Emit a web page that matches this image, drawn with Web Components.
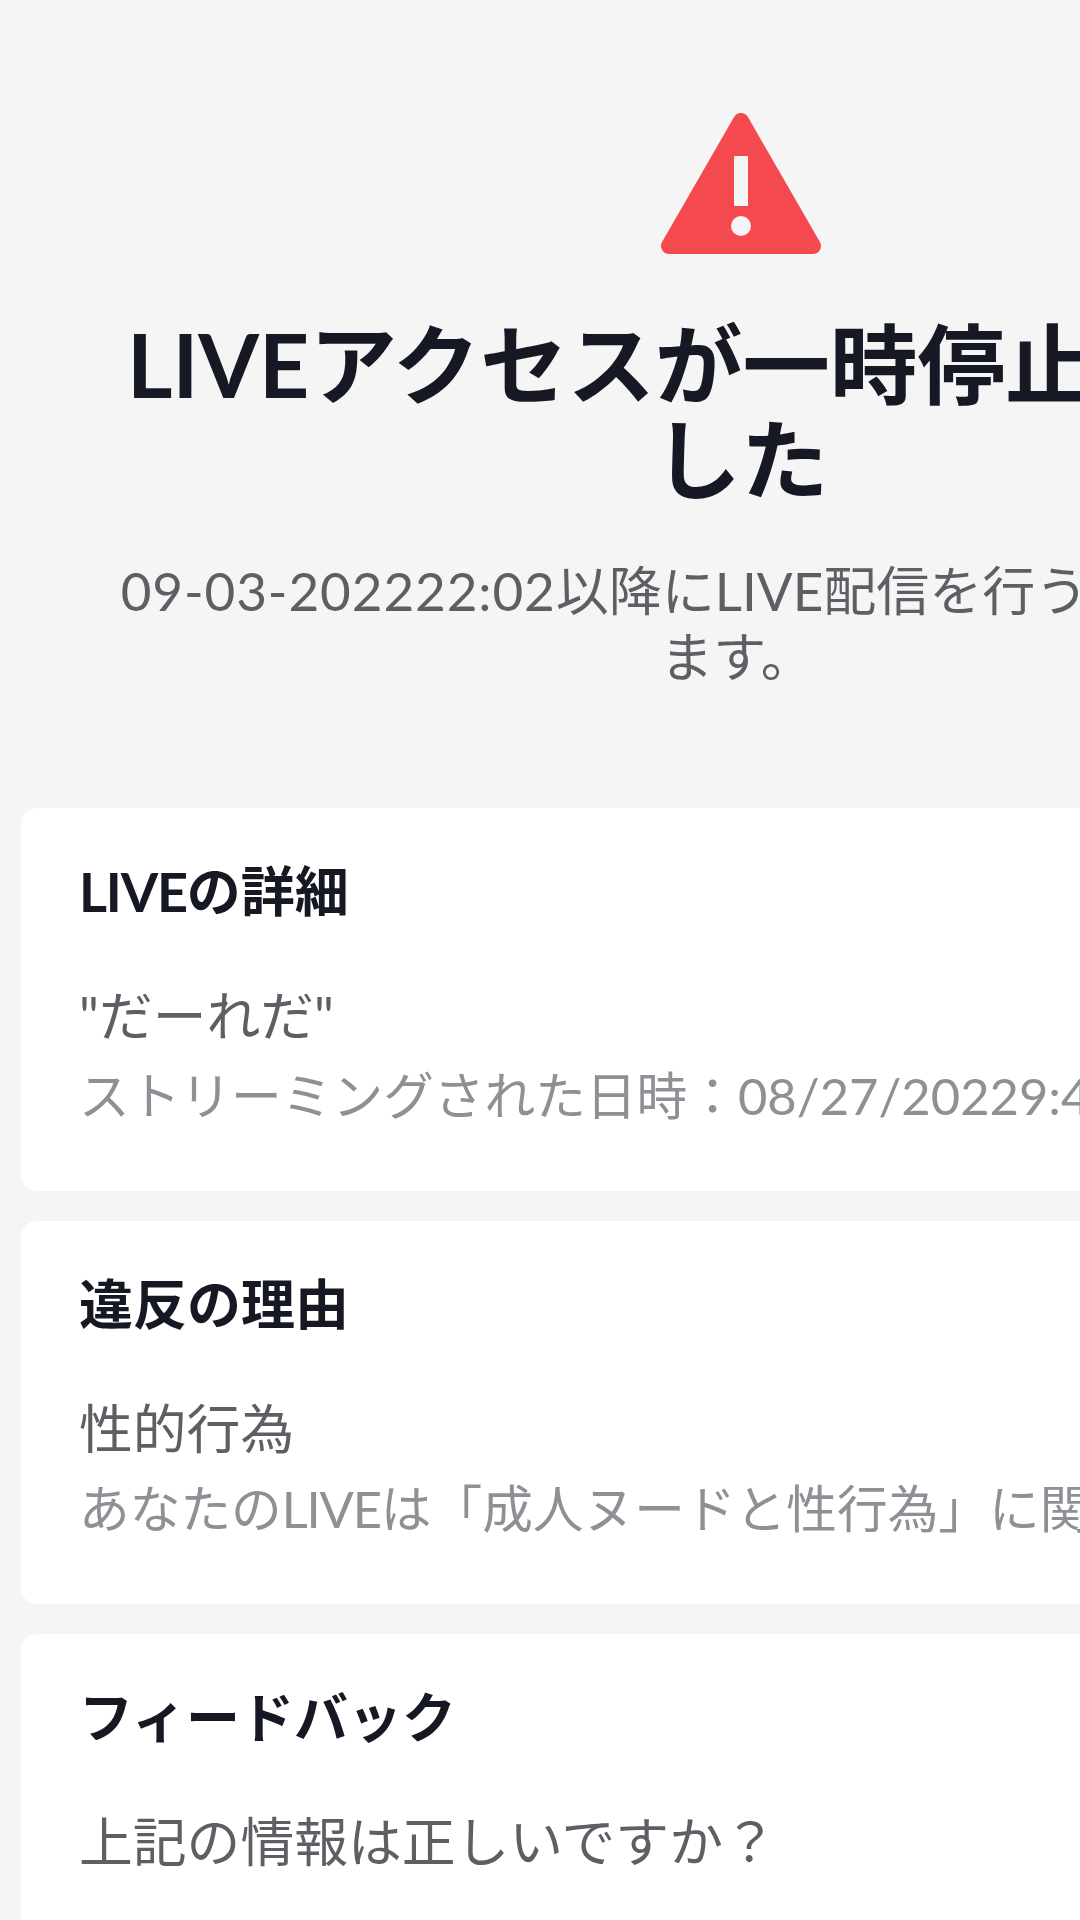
<!DOCTYPE html>
<html lang="ja">
<head>
<meta charset="utf-8">
<title>LIVE</title>
<style>
	html, body { margin: 0; background: #f5f5f6; overflow: hidden; height: 1920px; }
	body { font-family: Lato, "Noto Sans CJK JP", sans-serif; }
	live-page { width: 1482px; height: 1920px; overflow: hidden; }
	.digits { letter-spacing: .9px; }
	.latin { letter-spacing: -1.2px; }
</style>
</head>
<body>
<live-page>
	<suspend-notice>
		<span slot="title">LIVEアクセスが一時停止されました</span>
		<span slot="desc"><span class="digits">09-03-202222:02</span>以降にLIVE配信を行うことができます。</span>
	</suspend-notice>
	<info-card>
		<span slot="heading"><span class="latin">LIVE</span>の詳細</span>
		<span slot="main">"だーれだ"</span>
		<span slot="sub">ストリーミングされた日時：08/27/20229:42</span>
	</info-card>
	<info-card>
		<span slot="heading">違反の理由</span>
		<span slot="main">性的行為</span>
		<span slot="sub">あなたの<span class="latin">LIVE</span>は「成人ヌードと性行為」に関する</span>
	</info-card>
	<info-card>
		<span slot="heading">フィードバック</span>
		<span slot="main">上記の情報は正しいですか？</span>
	</info-card>
</live-page>

<script>
(function(){

	const pageTmpl = document.createElement("template");
	pageTmpl.innerHTML = `
		<style>
			:host {
				display: flex;
				flex-direction: column;
				gap: 30px;
				padding: 113px 21px 0;
				box-sizing: border-box;
			}
		</style>
		<slot></slot>
	`;

	class LivePage extends HTMLElement {
		constructor() {
			super();
			this.attachShadow({mode: "open"}).appendChild(pageTmpl.content.cloneNode(true));
		}
	}
	customElements.define("live-page", LivePage);


	const noticeTmpl = document.createElement("template");
	noticeTmpl.innerHTML = `
		<style>
			:host {
				display: flex;
				flex-direction: column;
				align-items: center;
				text-align: center;
				margin-bottom: 88px;
			}
			svg {
				display: block;
				width: 160px;
				height: 141px;
			}
			.title {
				margin-top: 63px;
				width: 1240px;
				font-size: 87.5px;
				line-height: 95px;
				font-weight: 700;
				color: #161823;
			}
			.desc {
				margin-top: 51px;
				margin-right: 8px;
				width: 1250px;
				font-size: 53px;
				line-height: 66px;
				color: #5e5f64;
			}
		</style>
		<svg viewBox="0 0 160 141" aria-hidden="true">
			<path d="M80 8 L8 133 H152 Z" fill="#f4494f" stroke="#f4494f" stroke-width="16" stroke-linejoin="round"/>
			<rect x="73" y="43" width="14" height="50" rx="1" fill="#f5f5f6"/>
			<circle cx="80" cy="113" r="10" fill="#f5f5f6"/>
		</svg>
		<div class="title"><slot name="title"></slot></div>
		<div class="desc"><slot name="desc"></slot></div>
	`;

	class SuspendNotice extends HTMLElement {
		constructor() {
			super();
			this.attachShadow({mode: "open"}).appendChild(noticeTmpl.content.cloneNode(true));
		}
	}
	customElements.define("suspend-notice", SuspendNotice);


	const cardTmpl = document.createElement("template");
	cardTmpl.innerHTML = `
		<style>
			:host {
				display: block;
				flex: none;
				background: #fff;
				border-radius: 16px;
				padding: 54px 60px 60px 58px;
				min-height: 269px;
				white-space: nowrap;
			}
			.heading {
				font-size: 54px;
				line-height: 60px;
				font-weight: 700;
				color: #161823;
			}
			.main {
				margin-top: 58px;
				font-size: 53.8px;
				line-height: 70px;
				color: #5e5f64;
			}
			.sub {
				margin-top: 11px;
				font-size: 50.7px;
				line-height: 70px;
				color: #8f9095;
			}
		</style>
		<div class="heading"><slot name="heading"></slot></div>
		<div class="main"><slot name="main"></slot></div>
		<div class="sub"><slot name="sub"></slot></div>
	`;

	class InfoCard extends HTMLElement {
		constructor() {
			super();
			var shadowRoot = this.attachShadow({mode: "open"});
			shadowRoot.appendChild(cardTmpl.content.cloneNode(true));
		}
	}
	customElements.define("info-card", InfoCard);
}())
</script>
</body>
</html>
